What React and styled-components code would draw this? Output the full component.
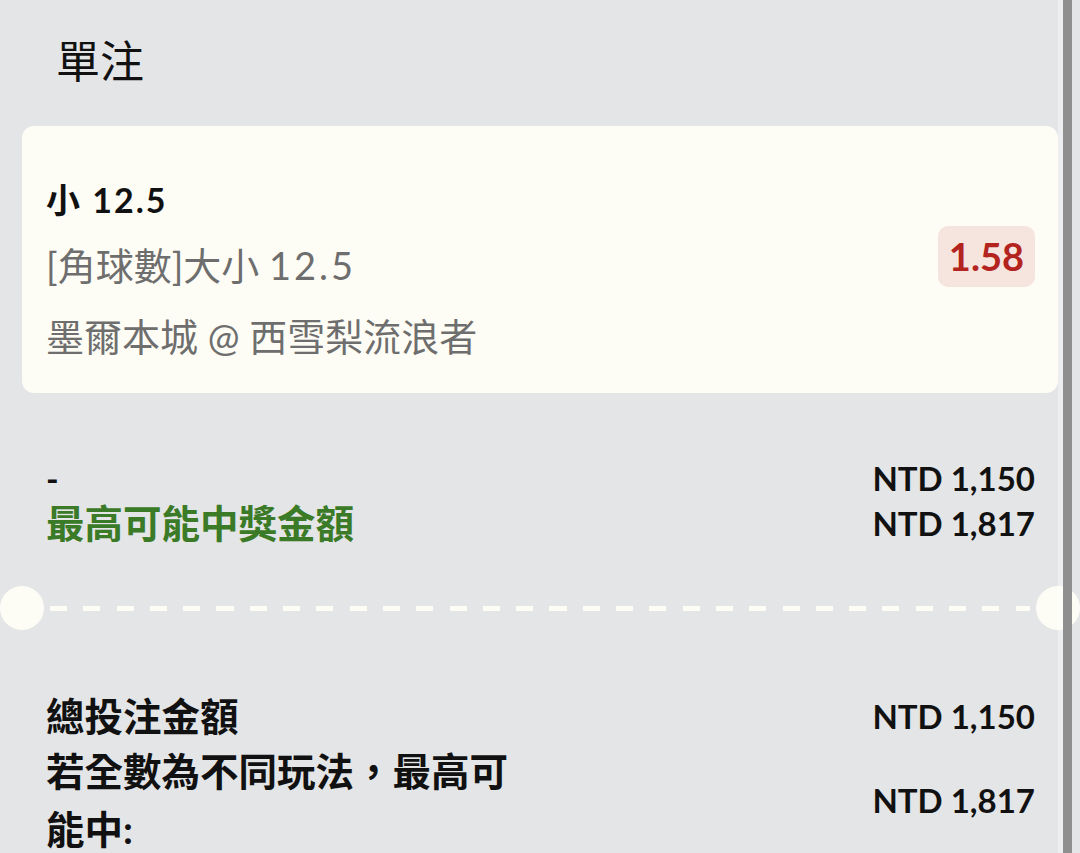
import React from "react";
import styled, { createGlobalStyle } from "styled-components";

const GlobalStyle = createGlobalStyle`
  html, body {
    margin: 0;
    padding: 0;
    height: 853px;
    overflow: hidden;
    background: #e4e5e7;
  }
  body {
    font-family: Lato, "Noto Sans CJK TC", sans-serif;
    color: #111;
  }
`;

const Page = styled.div`
  padding: 0 22px;
  box-sizing: border-box;
  width: 1080px;
`;

const Title = styled.h1`
  margin: 0;
  padding: 31px 0 0 34px;
  font-size: 44px;
  line-height: 60px;
  font-weight: 400;
  color: #111;
`;

const Card = styled.div`
  margin-top: 35px;
  background: #fefdf5;
  border-radius: 12px;
  padding: 50px 23px 27px 24px;
  display: flex;
  align-items: flex-start;
  justify-content: space-between;
`;

const CardInfo = styled.div`
  display: flex;
  flex-direction: column;
  gap: 11px;
`;

const Selection = styled.div`
  font-size: 34px;
  letter-spacing: 2px;
  line-height: 48px;
  font-weight: 700;
  color: #111;
`;

const Meta = styled.div`
  font-size: 38px;
  line-height: 60px;
  font-weight: 400;
  color: #6e6e6e;
`;

const Num = styled.span`
  letter-spacing: ${(p) => p.$spacing}px;
`;

const Odds = styled.div`
  margin-top: 50px;
  background: #f6e4de;
  color: #b3241e;
  border-radius: 10px;
  font-size: 38px;
  font-weight: 700;
  line-height: 61px;
  padding: 0 11px;
`;

const Summary = styled.div`
  padding: 0 23px 0 24px;
  margin-top: ${(p) => p.$top}px;
  display: flex;
  flex-direction: column;
`;

const Row = styled.div`
  display: flex;
  justify-content: space-between;
  align-items: center;
`;

const Label = styled.div`
  font-size: ${(p) => (p.$dash ? 34 : 38.5)}px;
  line-height: ${(p) => p.$lh}px;
  font-weight: 700;
  color: ${(p) => (p.$green ? "#3b7a27" : "#111")};
  max-width: 475px;
`;

const Amount = styled.div`
  font-size: 33px;
  line-height: ${(p) => p.$lh}px;
  font-weight: 700;
  color: #111;
  white-space: nowrap;
`;

const Separator = styled.div`
  margin: 40px -22px 0;
  display: flex;
  align-items: center;
  height: 44px;
`;

const Notch = styled.div`
  width: 44px;
  height: 44px;
  border-radius: 50%;
  background: #fefdf5;
  flex: none;
`;

const Dashes = styled.div`
  flex: 1;
  height: 5px;
  margin: 0 6px;
  background: repeating-linear-gradient(
    to right,
    #fefdf5 0,
    #fefdf5 17px,
    transparent 17px,
    transparent 33.3px
  );
`;

const ScrollThumb = styled.div`
  position: fixed;
  top: 0;
  bottom: 0;
  left: 1063px;
  width: 9px;
  background: #8f8f8f;
  box-shadow: -5px 0 0 rgba(255, 255, 255, 0.35);
`;

export default function App() {
  return (
    <>
      <GlobalStyle />
      <Page>
        <Title>單注</Title>
        <Card>
          <CardInfo>
            <Selection>小 12.5</Selection>
            <Meta>
              [角球數]大小 <Num $spacing={3}>12.5</Num>
            </Meta>
            <Meta>墨爾本城 @ 西雪梨流浪者</Meta>
          </CardInfo>
          <Odds>1.58</Odds>
        </Card>

        <Summary $top={63}>
          <Row>
            <Label $dash $lh={45}>-</Label>
            <Amount $lh={45}>NTD 1,150</Amount>
          </Row>
          <Row>
            <Label $green $lh={45}>最高可能中獎金額</Label>
            <Amount $lh={45}>NTD 1,817</Amount>
          </Row>
        </Summary>

        <Separator>
          <Notch />
          <Dashes />
          <Notch />
        </Separator>

        <Summary $top={60}>
          <Row>
            <Label $lh={52}>總投注金額</Label>
            <Amount $lh={52}>NTD 1,150</Amount>
          </Row>
          <Row>
            <Label $lh={58}>若全數為不同玩法，最高可能中:</Label>
            <Amount $lh={58}>NTD 1,817</Amount>
          </Row>
        </Summary>
      </Page>
      <ScrollThumb />
    </>
  );
}
